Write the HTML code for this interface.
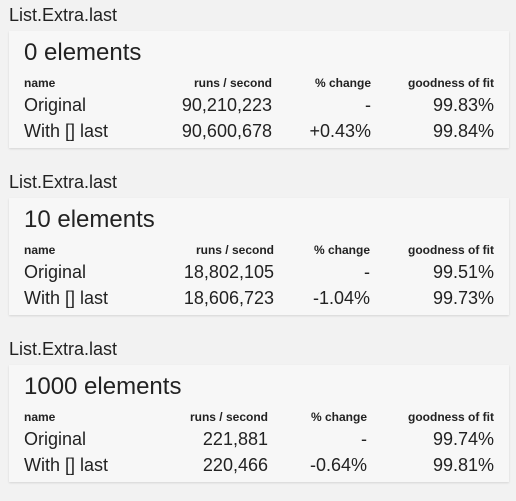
<!DOCTYPE html>
<html><head><style>
body{margin:0;background:#f2f2f2;font-family:"Liberation Sans",sans-serif;color:#222;width:516px;height:492px;overflow:hidden}
.sec{height:167px}
.t{font-size:18px;line-height:31px;padding-left:9px}
.card{margin:0 7px 0 9px;background:#f7f7f7;box-shadow:0 1px 2px rgba(0,0,0,.12);padding:8px 15px 5px;height:104px;overflow:hidden}
h2{margin:0;font-weight:normal;font-size:24px;line-height:26px;padding-top:1px}
table{border-collapse:collapse;table-layout:fixed;width:470px;margin-top:7px}
td,th{padding:0;text-align:right;white-space:nowrap}
td:first-child,th:first-child{text-align:left}
th{font-size:12px;line-height:20px;font-weight:bold}
td{font-size:18px;line-height:26px}
tr:nth-child(2) td{line-height:24px}
tr:nth-child(3) td{line-height:28px}
</style></head><body>
<div class="sec"><div class="t">List.Extra.last</div><div class="card"><h2>0 elements</h2>
<table><colgroup><col style="width:138px"><col style="width:110px"><col style="width:99px"><col style="width:123px"></colgroup>
<tr><th>name</th><th>runs / second</th><th>% change</th><th>goodness of fit</th></tr>
<tr><td>Original</td><td>90,210,223</td><td>-</td><td>99.83%</td></tr>
<tr><td>With [] last</td><td>90,600,678</td><td>+0.43%</td><td>99.84%</td></tr></table></div></div>
<div class="sec"><div class="t">List.Extra.last</div><div class="card"><h2>10 elements</h2>
<table><colgroup><col style="width:140px"><col style="width:110px"><col style="width:96px"><col style="width:124px"></colgroup>
<tr><th>name</th><th>runs / second</th><th>% change</th><th>goodness of fit</th></tr>
<tr><td>Original</td><td>18,802,105</td><td>-</td><td>99.51%</td></tr>
<tr><td>With [] last</td><td>18,606,723</td><td>-1.04%</td><td>99.73%</td></tr></table></div></div>
<div class="sec"><div class="t">List.Extra.last</div><div class="card"><h2>1000 elements</h2>
<table><colgroup><col style="width:138px"><col style="width:106px"><col style="width:99px"><col style="width:127px"></colgroup>
<tr><th>name</th><th>runs / second</th><th>% change</th><th>goodness of fit</th></tr>
<tr><td>Original</td><td>221,881</td><td>-</td><td>99.74%</td></tr>
<tr><td>With [] last</td><td>220,466</td><td>-0.64%</td><td>99.81%</td></tr></table></div></div>
</body></html>
